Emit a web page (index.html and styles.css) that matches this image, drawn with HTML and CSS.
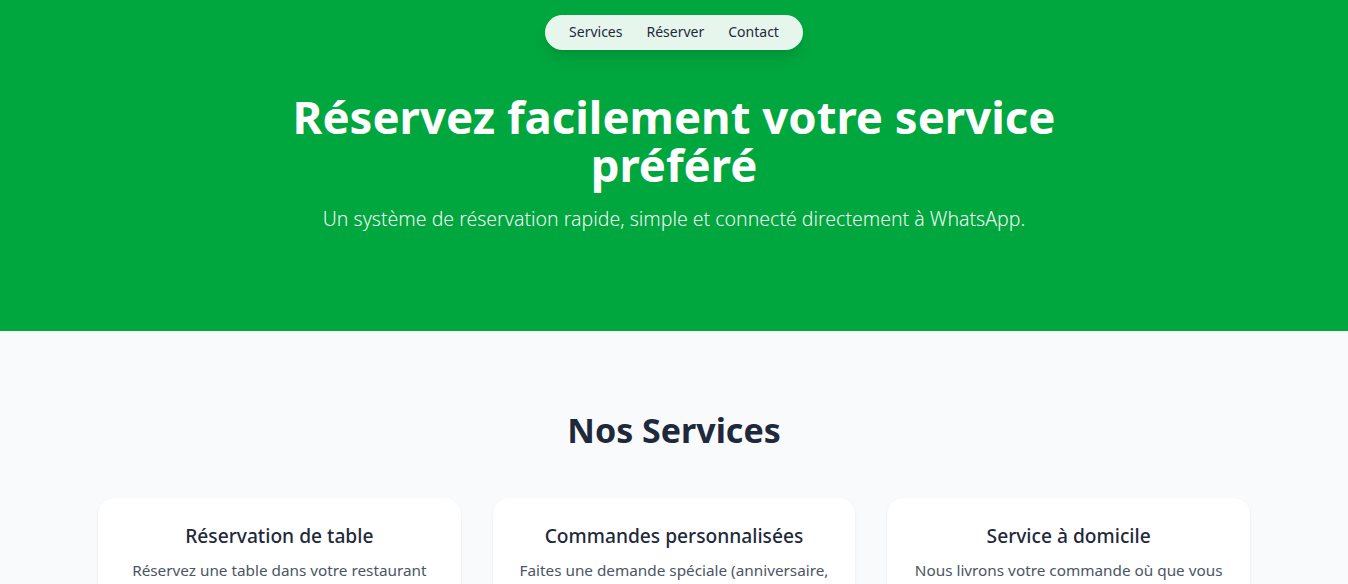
FILE: index.html
```html
<!DOCTYPE html>
<html lang="fr">
<head>
<meta charset="utf-8">
<title>Réservation</title>
<link rel="stylesheet" href="styles.css">
</head>
<body>
<header class="hero">
  <nav class="nav">
    <a href="#services">Services</a>
    <a href="#reserver">Réserver</a>
    <a href="#contact">Contact</a>
  </nav>
  <div class="hero-content">
    <h1>Réservez facilement votre service préféré</h1>
    <p>Un système de réservation rapide, simple et connecté directement à WhatsApp.</p>
  </div>
</header>
<section class="services" id="services">
  <h2>Nos Services</h2>
  <div class="grid">
    <div class="card">
      <h3>Réservation de table</h3>
      <p>Réservez une table dans votre restaurant préféré en quelques clics.</p>
    </div>
    <div class="card">
      <h3>Commandes personnalisées</h3>
      <p>Faites une demande spéciale (anniversaire, événement, cadeau...).</p>
    </div>
    <div class="card">
      <h3>Service à domicile</h3>
      <p>Nous livrons votre commande où que vous soyez, rapidement.</p>
    </div>
  </div>
</section>
</body>
</html>
```
FILE: styles.css
```css
* { box-sizing: border-box; }
html, body { margin: 0; padding: 0; }
body {
  font-family: "Noto Sans", "Open Sans", sans-serif;
  background: #f8fafc;
  color: #1e293b;
}
.hero {
  background: #00a63e;
  color: #fff;
  height: 331px;
  padding-top: 15px;
  display: flex;
  flex-direction: column;
  align-items: center;
}
.nav {
  display: flex;
  gap: 24px;
  padding: 7px 24px 8px;
  background: rgba(255, 255, 255, 0.9);
  border-radius: 9999px;
  box-shadow: 0 10px 15px -3px rgba(0,0,0,0.1), 0 4px 6px -4px rgba(0,0,0,0.1);
}
.nav a {
  color: #1e293b;
  text-decoration: none;
  font-size: 14px;
  line-height: 20px;
}
.hero-content {
  max-width: 768px;
  text-align: center;
  margin-top: 42px;
}
.hero h1 {
  margin: 0;
  font-size: 45.5px;
  line-height: 48px;
  font-weight: 700;
}
.hero p {
  margin: 17px 0 0;
  font-size: 19.5px;
  line-height: 28px;
  font-weight: 300;
  opacity: 0.95;
}
.services {
  padding: 79px 0 40px;
}
.services h2 {
  margin: 0 0 48px;
  text-align: center;
  font-size: 34px;
  line-height: 40px;
  font-weight: 700;
  color: #1e293b;
}
.grid {
  max-width: 1152px;
  margin: 0 auto;
  display: grid;
  grid-template-columns: repeat(3, 1fr);
  gap: 32px;
}
.card {
  background: #fff;
  border-radius: 16px;
  padding: 24px;
  text-align: center;
  box-shadow: 0 1px 3px rgba(0,0,0,0.06), 0 1px 2px rgba(0,0,0,0.03);
}
.card h3 {
  margin: 0 0 8px;
  font-size: 19.2px;
  line-height: 28px;
  font-weight: 500;
  color: #1e293b;
}
.card p {
  margin: 0;
  font-size: 15.3px;
  line-height: 24px;
  color: #4a5565;
}
```
